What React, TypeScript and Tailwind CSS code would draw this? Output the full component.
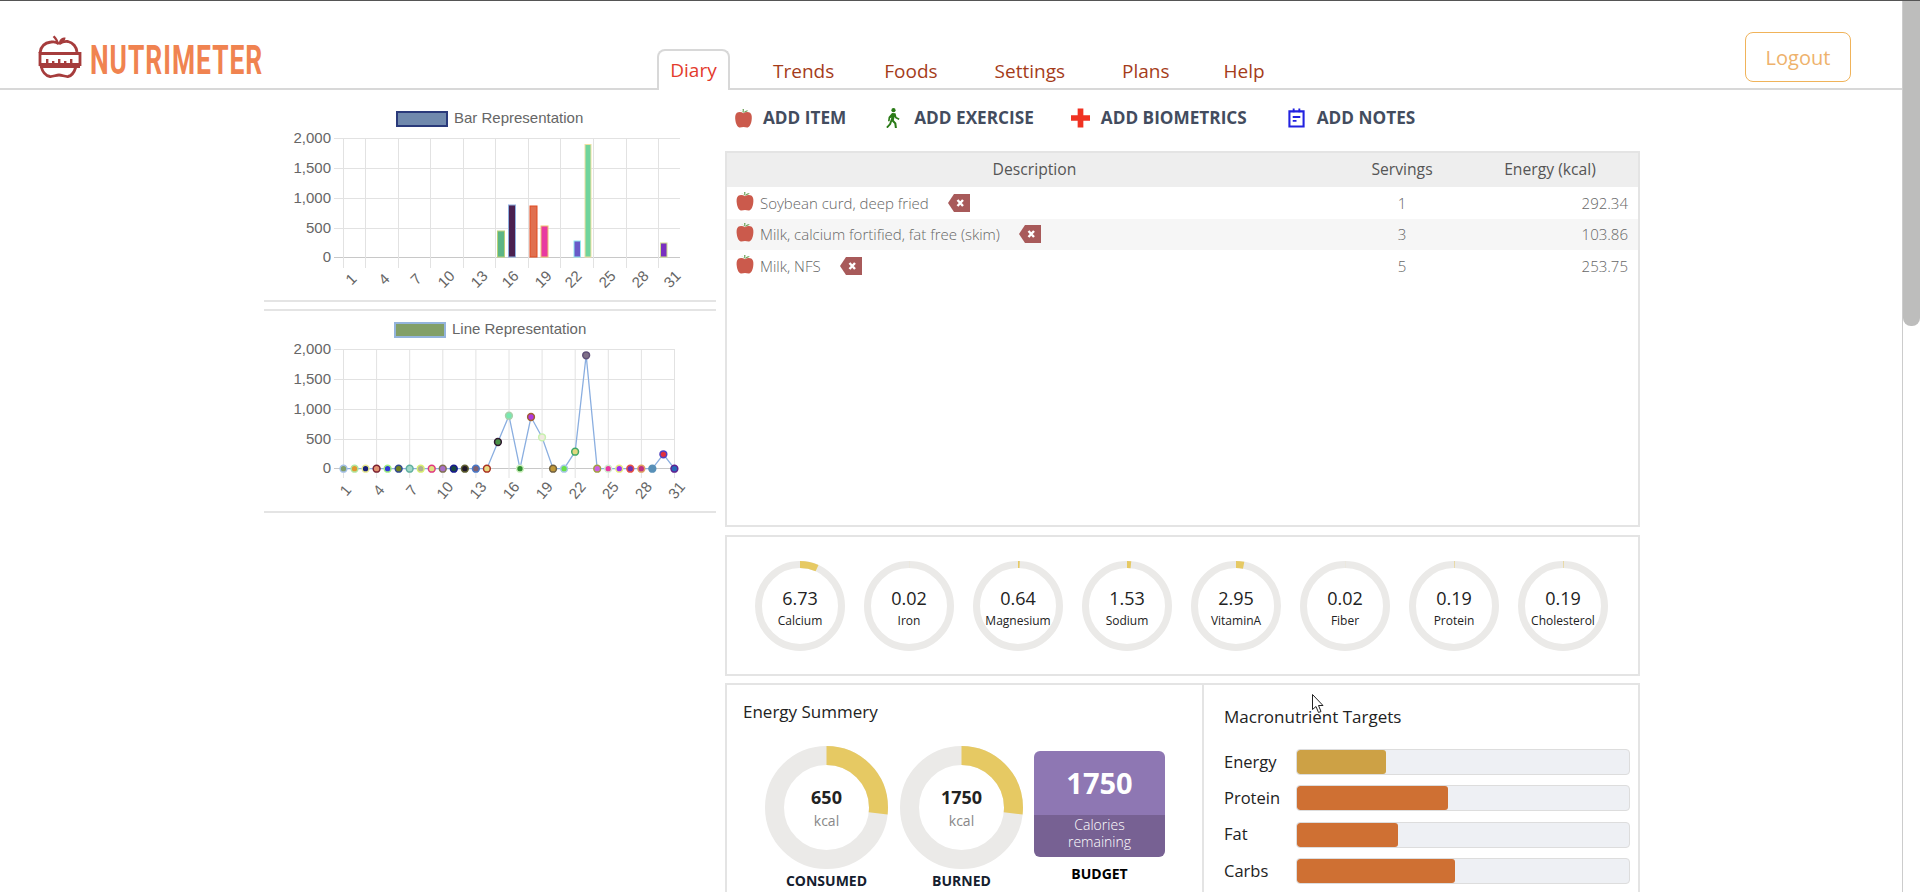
import React from 'react';

const sans = '[font-family:"Open_Sans","Noto_Sans",sans-serif]';

const tabs = [
  { label: 'Trends', gap: '' },
  { label: 'Foods', gap: 'ml-[50px]' },
  { label: 'Settings', gap: 'ml-[57px]' },
  { label: 'Plans', gap: 'ml-[57px]' },
  { label: 'Help', gap: 'ml-[54px]' },
];

const diary = [
  { name: 'Soybean curd, deep fried', servings: 1, energy: '292.34' },
  { name: 'Milk, calcium fortified, fat free (skim)', servings: 3, energy: '103.86' },
  { name: 'Milk, NFS', servings: 5, energy: '253.75' },
];

const nutrients = [
  { label: 'Calcium', value: 6.73 },
  { label: 'Iron', value: 0.02 },
  { label: 'Magnesium', value: 0.64 },
  { label: 'Sodium', value: 1.53 },
  { label: 'VitaminA', value: 2.95 },
  { label: 'Fiber', value: 0.02 },
  { label: 'Protein', value: 0.19 },
  { label: 'Cholesterol', value: 0.19 },
];

const macros = [
  { label: 'Energy', width: 89, color: '#cda145' },
  { label: 'Protein', width: 151, color: '#cf7033' },
  { label: 'Fat', width: 101, color: '#cf7033' },
  { label: 'Carbs', width: 158, color: '#cf7033' },
];

const bars = [
  { x: 497.5, w: 8, top: 231, fill: '#5cb585', stroke: '#b9d27a' },
  { x: 508.5, w: 8, top: 205, fill: '#4a2050', stroke: '#8fb0e0' },
  { x: 530, w: 8, top: 206, fill: '#e07050', stroke: '#e04a20' },
  { x: 541, w: 8, top: 226, fill: '#e83aa0', stroke: '#f0c070' },
  { x: 574, w: 7.5, top: 241, fill: '#6a5ac8', stroke: '#90e8f0' },
  { x: 585, w: 7, top: 144.5, fill: '#70d49c', stroke: '#f0e0a0' },
  { x: 660.5, w: 7.5, top: 243, fill: '#7a30c0', stroke: '#d0e090' },
];

// y of each day on the line chart, then fill and border of its point
const points: [number, string, string][] = [
  [468.7, '#829f68', '#a4c0e8'], [468.7, '#e09a30', '#b0e8a0'], [468.7, '#182078', '#e8e890'],
  [468.7, '#e09070', '#7a2030'], [468.7, '#3038d8', '#a0f080'], [468.7, '#708020', '#304890'],
  [468.7, '#a0d8c8', '#60b0a0'], [468.7, '#b0b090', '#d8f070'], [468.7, '#e0e080', '#e03880'],
  [468.7, '#a870c8', '#807050'], [468.7, '#184840', '#181890'], [468.7, '#201828', '#606030'],
  [468.7, '#806070', '#4878c8'], [468.7, '#e8d880', '#a83020'], [442, '#4a9048', '#301830'],
  [415.7, '#78e8b0', '#a8d0a8'], [468.7, '#309030', '#d0f0c0'], [417, '#b038e0', '#a06030'],
  [437.3, '#f0e8e0', '#c8f0b0'], [468.7, '#c09838', '#706040'], [468.7, '#68e048', '#a8c8e8'],
  [451.7, '#e0d880', '#40a868'], [355.3, '#807088', '#605078'], [468.7, '#d060e0', '#a0a040'],
  [468.7, '#e838a0', '#d0f0d0'], [468.7, '#a030f0', '#e8f080'], [468.7, '#7030b0', '#e85040'],
  [468.7, '#c03080', '#e0a060'], [468.7, '#5890b8', '#5890b8'], [454.3, '#e03040', '#5040c0'],
  [468.7, '#2868b8', '#602090'],
];

const dayLabels = ['1', '4', '7', '10', '13', '16', '19', '22', '25', '28', '31'];
const yLabels = ['2,000', '1,500', '1,000', '500', '0'];

function Apple({ className }: { className: string }) {
  return (
    <svg viewBox="0 0 18 22" className={className}>
      <path d="M9 6c-1-2-3-3-5-2.500C6 3 7 3.500 8.300 5.500L8 2h1.500l-.3 3.500C10.500 3.800 12 3.300 14 3.500 12.500 5 11 5.600 9 6z" fill="#6fa35a" />
      <path d="M9 6.500C11 5 14 4.800 16 6c2 1.500 2 5 1.600 8-.5 3.500-1.800 7-4.100 7.500-1.500.3-3-.5-4.500-.5s-3 .8-4.500.5C2.200 21 .9 17.500.4 14 0 11 0 7.500 2 6c2-1.200 5-1 7 .5z" fill="#cb5a4c" />
    </svg>
  );
}

function DeleteTag() {
  return (
    <svg viewBox="0 0 22 18" className="h-[18px] w-[22px] shrink-0">
      <path d="M6 0h16v18H6L0 9z" fill="#a85a5a" />
      <path d="M9.500 6l5.500 6M15 6l-5.500 6" stroke="#fff" strokeWidth="2.400" />
    </svg>
  );
}

function Ring({ size, stroke, pct, children }: { size: number; stroke: number; pct: number; children: React.ReactNode }) {
  const r = (size - stroke) / 2;
  const c = 2 * Math.PI * r;
  return (
    <div className="relative shrink-0" style={{ width: size, height: size }}>
      <svg width={size} height={size} className="-rotate-90">
        <circle cx={size / 2} cy={size / 2} r={r} fill="none" stroke="#ebeae8" strokeWidth={stroke} />
        <circle
          cx={size / 2}
          cy={size / 2}
          r={r}
          fill="none"
          stroke="#e6c963"
          strokeWidth={stroke}
          strokeDasharray={`${(c * pct) / 100} ${c}`}
        />
      </svg>
      <div className="absolute inset-0 flex flex-col items-center justify-center">{children}</div>
    </div>
  );
}

function Ticks({ ys }: { ys: number[] }) {
  return (
    <>
      {ys.map((y, i) => (
        <text key={y} x={331} y={y + 4} textAnchor="end" fontSize={15} fill="#666">
          {yLabels[i]}
        </text>
      ))}
    </>
  );
}

function BarChart() {
  const ys = [138.5, 168.5, 198.5, 228.5, 257.5];
  const xs = [343.5, 365.5, 398.5, 430.5, 463.5, 495.5, 528.5, 560.5, 593.5, 626.5, 658.5];
  const lx = [352, 385, 417, 447, 480, 511, 544, 574, 608, 641, 673];
  return (
    <svg viewBox="264 90 452 210" className="block h-[210px] w-[452px] [font-family:'Liberation_Sans',sans-serif]">
      <rect x={397} y={112} width={50} height={14} fill="#7089ad" stroke="#2a3a7a" strokeWidth={2} />
      <text x={454} y={123} fontSize={15} fill="#666">Bar Representation</text>
      {ys.map((y) => <line key={y} x1={334} x2={680} y1={y} y2={y} stroke={y === 257.5 ? '#c8c8c8' : '#e2e2e2'} />)}
      {xs.map((x) => <line key={x} x1={x} x2={x} y1={138} y2={268} stroke="#e2e2e2" />)}
      <Ticks ys={ys} />
      {bars.map((b) => (
        <rect key={b.x} x={b.x} y={b.top} width={b.w - 1} height={257 - b.top} fill={b.fill} stroke={b.stroke} strokeWidth={1} />
      ))}
      {dayLabels.map((d, i) => (
        <text key={d} x={lx[i]} y={280} fontSize={15} fill="#666" textAnchor="middle" dominantBaseline="middle" transform={`rotate(-45 ${lx[i]} 280)`}>
          {d}
        </text>
      ))}
    </svg>
  );
}

function LineChart() {
  const ys = [349.5, 379.5, 409.5, 439.5, 468.5];
  const xs = dayLabels.map((_, i) => 343.5 + i * 33.1);
  const px = (i: number) => 343.5 + i * 11.03;
  return (
    <svg viewBox="264 311 452 200" className="block h-[200px] w-[452px] [font-family:'Liberation_Sans',sans-serif]">
      <rect x={395} y={323} width={50} height={14} fill="#829f68" stroke="#94b4dc" strokeWidth={2} />
      <text x={452} y={334} fontSize={15} fill="#666">Line Representation</text>
      {ys.map((y) => <line key={y} x1={334} x2={675} y1={y} y2={y} stroke={y === 468.5 ? '#c8c8c8' : '#e2e2e2'} />)}
      {xs.map((x) => <line key={x} x1={x} x2={x} y1={349} y2={478} stroke="#e2e2e2" />)}
      <Ticks ys={ys} />
      <polyline points={points.map((p, i) => `${px(i)},${p[0]}`).join(' ')} fill="none" stroke="#8aaee0" strokeWidth={1.300} />
      {points.map((p, i) => (
        <circle key={i} cx={px(i)} cy={p[0]} r={3.400} fill={p[1]} stroke={p[2]} strokeWidth={1.500} />
      ))}
      {dayLabels.map((d, i) => (
        <text key={d} x={xs[i] + 3} y={491} fontSize={15} fill="#666" textAnchor="middle" dominantBaseline="middle" transform={`rotate(-50 ${xs[i] + 3} 491)`}>
          {d}
        </text>
      ))}
    </svg>
  );
}

export default function App() {
  return (
    <div className={`flex h-[892px] w-[1920px] overflow-hidden border-t border-[#555] bg-white ${sans}`}>
      <div className="relative min-w-0 flex-1">
        <header className="flex h-[89px] items-end border-b-2 border-[#d8d8d8]">
          <div className="mb-auto ml-[38px] flex w-[619px] items-start pt-[33px]">
            <svg viewBox="0 0 44 44" className="h-[44px] w-[44px] shrink-0">
              <path d="M21 10c-1.500-1.500-5-2.500-8-2C6 9 2.500 13 2 19M3 32c1.500 6 5 10 9 10.500 3 .3 6-1.500 9-1.500s6 1.800 9 1.500c4-.5 6.500-5 8-10M39 18c-.5-5-4-9.500-9-10.500-3-.5-7 1-9 2.500" fill="none" stroke="#a63c3c" strokeWidth="2.800" />
              <path d="M21 9.500c-.5-2.500-2-5.500-4.500-8l-1.800 1.400c2 2 3.500 4.500 4.300 6.800zM21 9c0-3.500 2.500-5.500 6.500-5.500C27.500 7 25 9 21 9z" fill="#a63c3c" />
              <path d="M2 19.500h40v11H2z" fill="none" stroke="#a63c3c" strokeWidth="2.800" />
              <path d="M2 31.500h40v2.500H2zM8 25h2.400v6H8zM14 27h2.400v4H14zM20 25h2.400v6H20zM26 27h2.400v4H26zM32 25h2.400v6H32z" fill="#a63c3c" />
            </svg>
            <span className="mt-[7px] ml-[8px] inline-block w-[174px] origin-left scale-x-[0.66] text-[40px] leading-[40px] font-bold tracking-[1.5px] whitespace-nowrap text-[#f08350] [font-family:'Roboto',sans-serif]">
              NUTRIMETER
            </span>
          </div>
          <div className="relative top-[2px] flex h-[41px] w-[73px] shrink-0 items-center justify-center rounded-t-[8px] border-x-2 border-t-2 border-b-0 border-[#d8d8d8] bg-white text-[19px] text-[#e33a2c]">
            Diary
          </div>
          <nav className="ml-[43px] flex h-[34px] items-center text-[19px] font-medium text-[#a53c1a]">
            {tabs.map((t) => (
              <span key={t.label} className={t.gap}>{t.label}</span>
            ))}
          </nav>
          <div className="absolute top-[31px] left-[1745px] flex h-[50px] w-[106px] items-center justify-center rounded-[8px] border border-[#f0b35a] pt-[1px] text-[20px] font-medium text-[#eeb26c]">
            Logout
          </div>
        </header>

        <div className="flex pl-[264px]">
          <aside className="w-[452px]">
            <div className="border-b-2 border-[#e4e4e4]"><BarChart /></div>
            <div className="mt-[7px] h-[2px] bg-[#e4e4e4]" />
            <div className="border-b-2 border-[#e4e4e4]"><LineChart /></div>
          </aside>

          <main className="ml-[9px] w-[915px]">
            <div className="flex h-[61px] items-center pb-[6px] text-[17.2px] font-bold text-[#434c5e]">
              <Apple className="ml-[10px] h-[21px] w-[17px]" />
              <span className="ml-[11px]">ADD ITEM</span>
              <svg viewBox="0 0 14 20" className="ml-[40px] h-[20px] w-[14px]">
                <circle cx="7.500" cy="2.200" r="2.100" fill="#2a7a16" />
                <path d="M6 5l3.500.3 1 3.700 3 1.500-.7 1.400-3.500-1.600-.7-1.500-.8 3.500 2.500 2.700.6 5h-2l-.6-4.200-2.300-2.300-1 3-3.500 3.800-1.300-1.300 3-3.300L5.500 9.500l-1.400.8-.5 3H2L2.600 9z" fill="#2a7a16" />
              </svg>
              <span className="ml-[14px]">ADD EXERCISE</span>
              <svg viewBox="0 0 20 20" className="ml-[37px] h-[20px] w-[19px]">
                <path d="M7 0h6v7h7v6h-7v7H7v-7H0V7h7z" fill="#f03222" />
              </svg>
              <span className="ml-[11px]">ADD BIOMETRICS</span>
              <svg viewBox="0 0 18 20" className="ml-[41px] h-[20px] w-[17px]">
                <path d="M1.500 3h15v16h-15z" fill="none" stroke="#2222e0" strokeWidth="2.200" />
                <path d="M5 0h2v4H5zM11 0h2v4h-2zM5 8h8v2H5zM5 12h4v2H5z" fill="#2222e0" />
              </svg>
              <span className="ml-[12px]">ADD NOTES</span>
            </div>

            <section className="h-[376px] border-2 border-[#e4e4e4]">
              <div className="grid h-[34px] grid-cols-[615px_120px_1fr] items-center bg-[#eee] text-center text-[15.7px] text-[#555]">
                <span>Description</span>
                <span>Servings</span>
                <span>Energy (kcal)</span>
              </div>
              {diary.map((row, i) => (
                <div
                  key={row.name}
                  className={`grid h-[31.5px] grid-cols-[615px_120px_1fr] items-center text-[15px] font-light text-[#666] ${i === 1 ? 'bg-[#f6f6f6]' : ''}`}
                >
                  <div className="flex items-center pl-[9px]">
                    <Apple className="mb-[5px] h-[21px] w-[18px] shrink-0" />
                    <span className="ml-[6px]">{row.name}</span>
                    <span className="ml-[19px]"><DeleteTag /></span>
                  </div>
                  <span className="text-center">{row.servings}</span>
                  <span className="pr-[10px] text-right">{row.energy}</span>
                </div>
              ))}
            </section>

            <section className="mt-[8px] flex h-[141px] items-center gap-[19px] border-2 border-[#e4e4e4] pl-[28px]">
              {nutrients.map((n) => (
                <Ring key={n.label} size={90} stroke={7} pct={n.value}>
                  <span className="mt-[5px] text-[18px] leading-[24px] text-[#222]">{n.value}</span>
                  <span className="mt-[2px] text-[12px] leading-[18px] text-[#222]">{n.label}</span>
                </Ring>
              ))}
            </section>

            <section className="mt-[7px] flex h-[260px] border-2 border-[#e4e4e4]">
              <div className="w-[477px] border-r-2 border-[#e4e4e4] pt-[15px] pl-[16px]">
                <h3 className="text-[17px] leading-[24px] font-medium text-[#222]">Energy Summery</h3>
                <div className="mt-[22px] ml-[22px] flex">
                  <div className="flex w-[123px] flex-col items-center">
                    <Ring size={123} stroke={19} pct={26.8}>
                      <span className="mt-[3px] text-[18px] leading-[24px] font-bold text-[#222]">650</span>
                      <span className="text-[14px] leading-[24px] text-[#888]">kcal</span>
                    </Ring>
                    <span className="mt-[2px] text-[14px] leading-[20px] font-bold text-[#15202e]">CONSUMED</span>
                  </div>
                  <div className="ml-[12px] flex w-[123px] flex-col items-center">
                    <Ring size={123} stroke={19} pct={26.8}>
                      <span className="mt-[3px] text-[18px] leading-[24px] font-bold text-[#222]">1750</span>
                      <span className="text-[14px] leading-[24px] text-[#888]">kcal</span>
                    </Ring>
                    <span className="mt-[2px] text-[14px] leading-[20px] font-bold text-[#15202e]">BURNED</span>
                  </div>
                  <div className="mt-[5px] ml-[11px] flex w-[131px] flex-col items-center">
                    <div className="w-full overflow-hidden rounded-[6px] text-center text-white">
                      <div className="flex h-[64px] items-center justify-center bg-[#8e77b3] text-[29px] font-bold">1750</div>
                      <div className="h-[42px] bg-[#776193] pt-[1px] text-[14px] leading-[17px] font-light">
                        Calories
                        <br />
                        remaining
                      </div>
                    </div>
                    <span className="mt-[7px] text-[14px] leading-[20px] font-bold text-black">BUDGET</span>
                  </div>
                </div>
              </div>
              <div className="flex-1 pt-[20px] pr-[8px] pl-[20px]">
                <h3 className="text-[17px] leading-[24px] font-medium text-[#222]">Macronutrient Targets</h3>
                <div className="mt-[20px] flex flex-col gap-[10.300px]">
                  {macros.map((m) => (
                    <div key={m.label} className="flex items-center">
                      <span className="w-[72px] text-[16.5px] font-medium text-[#222]">{m.label}</span>
                      <div className="h-[26px] flex-1 overflow-hidden rounded-[4px] border border-[#ddd] bg-[#eef0f4]">
                        <div className="h-full rounded-[3px]" style={{ width: m.width, backgroundColor: m.color }} />
                      </div>
                    </div>
                  ))}
                </div>
              </div>
            </section>
          </main>
        </div>

        <svg viewBox="0 0 12 19" className="absolute top-[693px] left-[1312px] h-[19px] w-[12px]">
          <path d="M.5.5v15l3.500-3 2.500 6 2.500-1-2.500-6H11z" fill="#fff" stroke="#222" strokeWidth="1" />
        </svg>
      </div>

      <div className="w-[18px] shrink-0 border-l border-[#ccc] bg-white">
        <div className="h-[325px] rounded-b-[8px] bg-[#bdbdbc]" />
      </div>
    </div>
  );
}
